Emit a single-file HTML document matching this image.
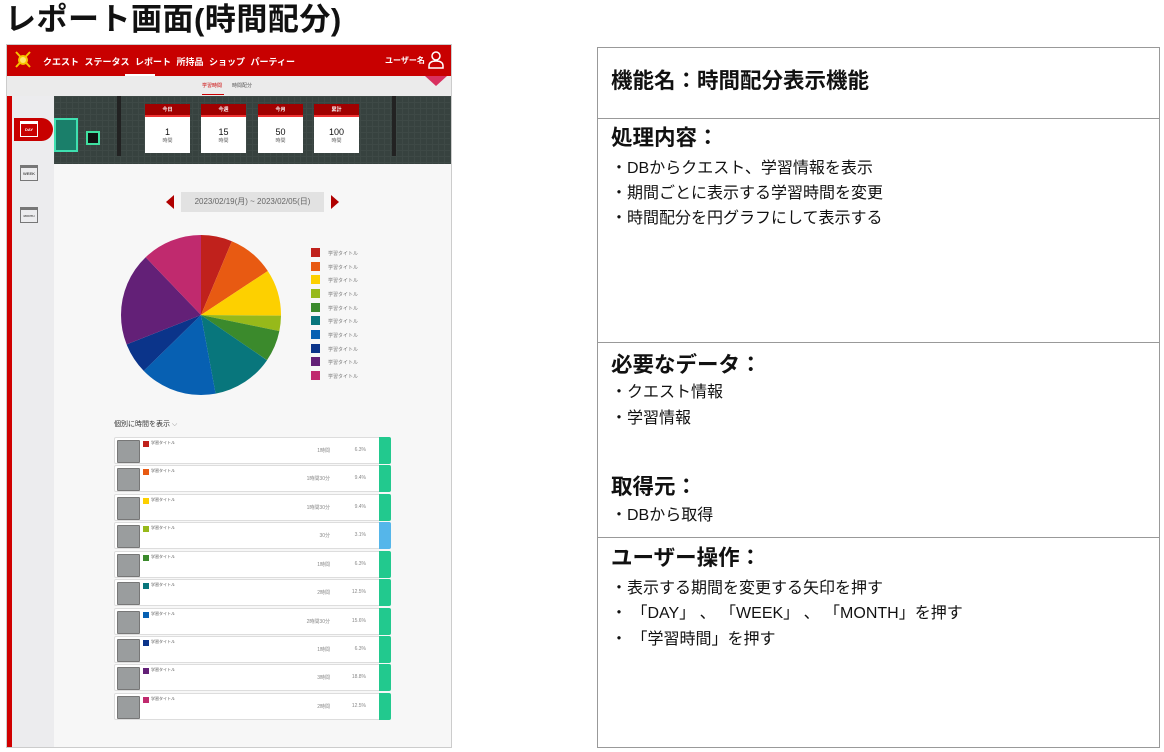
<!DOCTYPE html>
<html><head><meta charset="utf-8">
<style>
*{margin:0;padding:0;box-sizing:border-box}
body{width:1164px;height:752px;background:#fff;position:relative;overflow:hidden;font-family:"Liberation Sans","Noto Sans CJK JP",sans-serif;color:#111}
.a{position:absolute}
.h1{left:5px;top:-6px;font-size:31px;font-weight:bold;white-space:nowrap;letter-spacing:0.5px}
.app{left:6px;top:44px;width:446px;height:704px;border:1px solid #ccc;background:#f7f7f7;overflow:hidden}
.nav{left:0;top:0;width:444px;height:31px;background:#c80000;color:#fff;font-size:9px;font-weight:bold}
.sub{left:0;top:31px;width:444px;height:20px;background:#ebebeb;font-size:5px;color:#555}
.side{left:0;top:51px;width:47px;height:660px;background:#ececee;border-left:5px solid #d00000}
.banner{left:47px;top:51px;width:397px;height:68px;background:#37423f;background-image:linear-gradient(#3e4946 1px,transparent 1px),linear-gradient(90deg,#3e4946 1px,transparent 1px);background-size:6px 6px}
.card{width:45px;height:49px;background:#fff;top:8px;text-align:center;font-size:9px}
.card b{display:block;background:#a00000;color:#fff;height:13px;font-size:5px;line-height:13px;border-bottom:2px solid #e33}
.card i{display:block;font-style:normal;margin-top:11px;line-height:9px}
.card s{display:block;text-decoration:none;font-size:5px;color:#666}
.row{left:107px;width:277px;height:27px;background:#fff;border:1px solid #ddd;border-radius:2px}
.row .th{position:absolute;left:2px;top:2px;width:23px;height:23px;background:#9a9d9e;border:1px solid #777;border-radius:1px}
.row .sq{position:absolute;left:28px;top:3px;width:6px;height:6px}
.row .t{position:absolute;left:36px;top:2px;font-size:4px;color:#555}
.row .h{position:absolute;right:60px;top:9px;font-size:5px;color:#888}
.row .p{position:absolute;right:24px;top:9px;font-size:5px;color:#888}
.row .g{position:absolute;right:-1px;top:-1px;width:12px;height:27px;background:#22c98e;border-radius:0 2px 2px 0}
.leg{left:304px;width:9px;height:9px}
.legt{left:321px;font-size:5px;color:#777}
.box{left:597px;top:47px;width:563px;height:701px;border:1px solid #999}
.div{left:597px;width:563px;height:1px;background:#999}
.t1{left:611px;font-size:21.5px;font-weight:bold;white-space:nowrap;line-height:26px}
.t2{left:611px;font-size:16px;white-space:nowrap;line-height:20px}
</style></head><body>
<div class="a h1">レポート画面(時間配分)</div>
<div class="a app">
 <div class="a nav">
  <div class="a" style="left:8px;top:6px;width:16px;height:17px;"><svg width="16" height="17"><path d="M1 1L15 16M15 1L1 16" stroke="#f7c400" stroke-width="2"/><circle cx="8" cy="9" r="5" fill="#f7c400"/><circle cx="8" cy="9" r="3" fill="#ffe36a"/></svg></div>
  <div class="a" style="left:36px;top:10px;white-space:nowrap;word-spacing:3px">クエスト ステータス レポート 所持品 ショップ パーティー</div>
  <div class="a" style="left:118px;top:29px;width:30px;height:2px;background:#fff"></div>
  <div class="a" style="left:378px;top:10px;font-size:8px;white-space:nowrap">ユーザー名</div>
  <svg class="a" style="left:421px;top:6px" width="16" height="18"><circle cx="8" cy="5" r="4" fill="none" stroke="#fff" stroke-width="1.5"/><path d="M1 17v-2q0-5 7-5q7 0 7 5v2z" fill="none" stroke="#fff" stroke-width="1.5"/></svg>
 </div>
 <div class="a sub"><span class="a" style="left:195px;top:6px;color:#c00">学習時間</span><span class="a" style="left:225px;top:6px">時間配分</span><div class="a" style="left:195px;top:18px;width:22px;height:1px;background:#c00"></div></div>
 <div class="a" style="left:418px;top:31px;width:0;height:0;border-left:11px solid transparent;border-right:11px solid transparent;border-top:10px solid #d9305f"></div>
 <div class="a side">
  <div class="a" style="left:2px;top:22px;width:39px;height:23px;background:#c80000;border-radius:0 12px 12px 0"></div>
  <div class="a" style="left:8px;top:25px;width:18px;height:16px;border:1px solid #fff;border-top-width:3px;color:#fff;font-size:4px;text-align:center;line-height:12px;font-weight:bold">DAY</div>
  <div class="a" style="left:8px;top:69px;width:18px;height:16px;border:1px solid #777;border-top-width:3px;color:#555;font-size:4px;text-align:center;line-height:12px;font-weight:bold">WEEK</div>
  <div class="a" style="left:8px;top:111px;width:18px;height:16px;border:1px solid #777;border-top-width:3px;color:#555;font-size:3px;text-align:center;line-height:12px;font-weight:bold">MONTH</div>
 </div>
 <div class="a banner">
  <div class="a" style="left:0;top:22px;width:24px;height:34px;background:#1a7f6a;border:2px solid #3fe0b0"></div>
  <div class="a" style="left:32px;top:35px;width:14px;height:14px;background:#111;border:2px solid #3fe0a0"></div>
  <div class="a" style="left:63px;top:0;width:4px;height:60px;background:#222"></div>
  <div class="a" style="left:338px;top:0;width:4px;height:60px;background:#222"></div>
  <div class="a card" style="left:91px"><b>今日</b><i>1</i><s>時間</s></div>
  <div class="a card" style="left:147px"><b>今週</b><i>15</i><s>時間</s></div>
  <div class="a card" style="left:204px"><b>今月</b><i>50</i><s>時間</s></div>
  <div class="a card" style="left:260px"><b>累計</b><i>100</i><s>時間</s></div>
 </div>
 <svg class="a" style="left:158px;top:150px" width="10" height="14"><path d="M9 0L1 7L9 14z" fill="#b00000"/></svg>
 <div class="a" style="left:174px;top:147px;width:143px;height:20px;background:#e2e2e2;font-size:8px;color:#666;text-align:center;line-height:20px;white-space:nowrap">2023/02/19(月) ~ 2023/02/05(日)</div>
 <svg class="a" style="left:323px;top:150px" width="10" height="14"><path d="M1 0L9 7L1 14z" fill="#b00000"/></svg>
 <svg class="a" style="left:113px;top:189px" width="162" height="162" viewBox="0 0 162 162">
  <g transform="rotate(-90 81 81)" fill="none" stroke-width="80">
   <circle cx="81" cy="81" r="40" stroke="#c0211c" stroke-dasharray="15.83 300" stroke-dashoffset="0"/>
   <circle cx="81" cy="81" r="40" stroke="#e85a12" stroke-dasharray="23.63 300" stroke-dashoffset="-15.83"/>
   <circle cx="81" cy="81" r="40" stroke="#fdd000" stroke-dasharray="23.63 300" stroke-dashoffset="-39.46"/>
   <circle cx="81" cy="81" r="40" stroke="#97b91a" stroke-dasharray="7.79 300" stroke-dashoffset="-63.08"/>
   <circle cx="81" cy="81" r="40" stroke="#3b8a2c" stroke-dasharray="15.83 300" stroke-dashoffset="-70.87"/>
   <circle cx="81" cy="81" r="40" stroke="#08767c" stroke-dasharray="31.42 300" stroke-dashoffset="-86.71"/>
   <circle cx="81" cy="81" r="40" stroke="#0760b2" stroke-dasharray="39.21 300" stroke-dashoffset="-118.12"/>
   <circle cx="81" cy="81" r="40" stroke="#0b348a" stroke-dasharray="15.83 300" stroke-dashoffset="-157.33"/>
   <circle cx="81" cy="81" r="40" stroke="#632077" stroke-dasharray="47.25 300" stroke-dashoffset="-173.16"/>
   <circle cx="81" cy="81" r="40" stroke="#c02a6e" stroke-dasharray="31.42 300" stroke-dashoffset="-220.41"/>
  </g>
 </svg>
 <div class="a leg" style="top:203px;background:#c0211c"></div><div class="a legt" style="top:205px">学習タイトル</div>
 <div class="a leg" style="top:217px;background:#e85a12"></div><div class="a legt" style="top:219px">学習タイトル</div>
 <div class="a leg" style="top:230px;background:#fdd000"></div><div class="a legt" style="top:232px">学習タイトル</div>
 <div class="a leg" style="top:244px;background:#97b91a"></div><div class="a legt" style="top:246px">学習タイトル</div>
 <div class="a leg" style="top:258px;background:#3b8a2c"></div><div class="a legt" style="top:260px">学習タイトル</div>
 <div class="a leg" style="top:271px;background:#08767c"></div><div class="a legt" style="top:273px">学習タイトル</div>
 <div class="a leg" style="top:285px;background:#0760b2"></div><div class="a legt" style="top:287px">学習タイトル</div>
 <div class="a leg" style="top:299px;background:#0b348a"></div><div class="a legt" style="top:301px">学習タイトル</div>
 <div class="a leg" style="top:312px;background:#632077"></div><div class="a legt" style="top:314px">学習タイトル</div>
 <div class="a leg" style="top:326px;background:#c02a6e"></div><div class="a legt" style="top:328px">学習タイトル</div>
 <div class="a" style="left:107px;top:374px;font-size:7px;color:#333;white-space:nowrap">個別に時間を表示 <span style="color:#888">⌵</span></div>
 <div class="a row" style="top:392px"><div class="th"></div><div class="sq" style="background:#c0211c"></div><div class="t">学習タイトル</div><div class="h">1時間</div><div class="p">6.3%</div><div class="g"></div></div>
 <div class="a row" style="top:420px"><div class="th"></div><div class="sq" style="background:#e85a12"></div><div class="t">学習タイトル</div><div class="h">1時間30分</div><div class="p">9.4%</div><div class="g"></div></div>
 <div class="a row" style="top:449px"><div class="th"></div><div class="sq" style="background:#fdd000"></div><div class="t">学習タイトル</div><div class="h">1時間30分</div><div class="p">9.4%</div><div class="g"></div></div>
 <div class="a row" style="top:477px"><div class="th"></div><div class="sq" style="background:#97b91a"></div><div class="t">学習タイトル</div><div class="h">30分</div><div class="p">3.1%</div><div class="g" style="background:#55b6ea"></div></div>
 <div class="a row" style="top:506px"><div class="th"></div><div class="sq" style="background:#3b8a2c"></div><div class="t">学習タイトル</div><div class="h">1時間</div><div class="p">6.3%</div><div class="g"></div></div>
 <div class="a row" style="top:534px"><div class="th"></div><div class="sq" style="background:#08767c"></div><div class="t">学習タイトル</div><div class="h">2時間</div><div class="p">12.5%</div><div class="g"></div></div>
 <div class="a row" style="top:563px"><div class="th"></div><div class="sq" style="background:#0760b2"></div><div class="t">学習タイトル</div><div class="h">2時間30分</div><div class="p">15.6%</div><div class="g"></div></div>
 <div class="a row" style="top:591px"><div class="th"></div><div class="sq" style="background:#0b348a"></div><div class="t">学習タイトル</div><div class="h">1時間</div><div class="p">6.3%</div><div class="g"></div></div>
 <div class="a row" style="top:619px"><div class="th"></div><div class="sq" style="background:#632077"></div><div class="t">学習タイトル</div><div class="h">3時間</div><div class="p">18.8%</div><div class="g"></div></div>
 <div class="a row" style="top:648px"><div class="th"></div><div class="sq" style="background:#c02a6e"></div><div class="t">学習タイトル</div><div class="h">2時間</div><div class="p">12.5%</div><div class="g"></div></div>
</div>

<div class="a box"></div>
<div class="a div" style="top:118px"></div>
<div class="a div" style="top:342px"></div>
<div class="a div" style="top:537px"></div>
<div class="a t1" style="top:68px">機能名：時間配分表示機能</div>
<div class="a t1" style="top:125px">処理内容：</div>
<div class="a t2" style="top:159px">・DBからクエスト、学習情報を表示</div>
<div class="a t2" style="top:184px">・期間ごとに表示する学習時間を変更</div>
<div class="a t2" style="top:209px">・時間配分を円グラフにして表示する</div>
<div class="a t1" style="top:352px">必要なデータ：</div>
<div class="a t2" style="top:383px">・クエスト情報</div>
<div class="a t2" style="top:409px">・学習情報</div>
<div class="a t1" style="top:474px">取得元：</div>
<div class="a t2" style="top:506px">・DBから取得</div>
<div class="a t1" style="top:545px">ユーザー操作：</div>
<div class="a t2" style="top:579px">・表示する期間を変更する矢印を押す</div>
<div class="a t2" style="top:604px">・ 「DAY」 、 「WEEK」 、 「MONTH」を押す</div>
<div class="a t2" style="top:630px">・ 「学習時間」を押す</div>
</body></html>
